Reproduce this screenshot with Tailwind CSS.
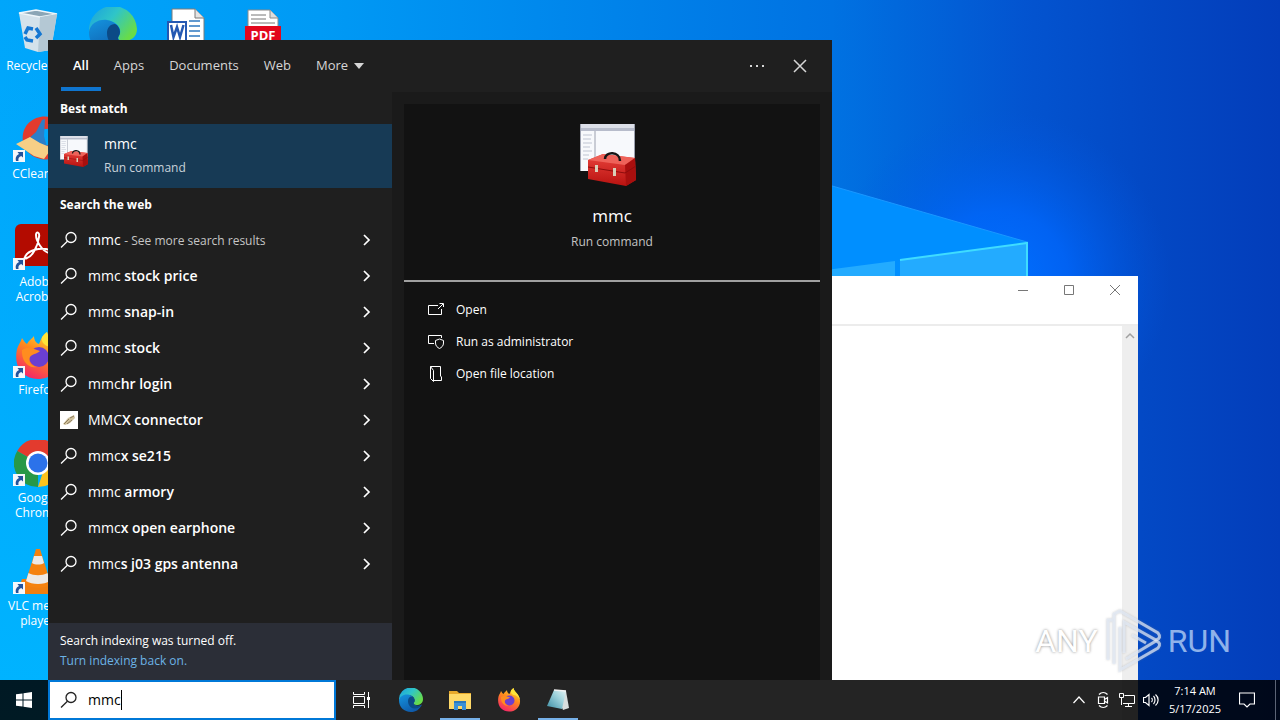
<!DOCTYPE html>
<html lang="en">

<head>
  <meta charset="UTF-8">
  <meta name="viewport" content="width=device-width, initial-scale=1.0">
  <title>Desktop - Search</title>
  <script src="https://cdn.jsdelivr.net/npm/@tailwindcss/browser@4"></script>
</head>

<body class="relative h-screen overflow-hidden bg-[#00a8fa] font-['Open_Sans','Noto_Sans',sans-serif] text-white">
  <!-- Shared symbols -->
  <svg class="absolute h-0 w-0" aria-hidden="true">
    <defs>
      <linearGradient id="edgeGreen" x1="0" y1="0" x2="1" y2="0.6">
        <stop offset="0" stop-color="#1a9fe0" />
        <stop offset="0.5" stop-color="#2fc5c8" />
        <stop offset="1" stop-color="#68dc48" />
      </linearGradient>
      <linearGradient id="edgeBlue" x1="0" y1="0" x2="0.6" y2="1">
        <stop offset="0" stop-color="#1494df" />
        <stop offset="1" stop-color="#0f59a8" />
      </linearGradient>
      <linearGradient id="foxBody" x1="0.8" y1="0" x2="0.3" y2="1">
        <stop offset="0" stop-color="#ffe53b" />
        <stop offset="0.45" stop-color="#ff8a1c" />
        <stop offset="1" stop-color="#f5236a" />
      </linearGradient>
      <linearGradient id="boxRed" x1="0" y1="0" x2="0" y2="1">
        <stop offset="0" stop-color="#e8433c" />
        <stop offset="1" stop-color="#b81210" />
      </linearGradient>
      <linearGradient id="padGlass" x1="0" y1="1" x2="1" y2="0">
        <stop offset="0" stop-color="#3b8da3" />
        <stop offset="0.6" stop-color="#9fd3dc" />
        <stop offset="1" stop-color="#e6f4f4" />
      </linearGradient>
    </defs>
    <symbol id="lens" viewBox="0 0 18 18">
      <circle cx="11" cy="6.5" r="5" fill="none" stroke="currentColor" stroke-width="1.3" />
      <path d="M7.4 10.2L1 16.5" fill="none" stroke="currentColor" stroke-width="1.3" />
    </symbol>
    <symbol id="chevron" viewBox="0 0 10 12">
      <path d="M2 1l5 5-5 5" fill="none" stroke="currentColor" stroke-width="1.7" />
    </symbol>
    <symbol id="edge" viewBox="0 0 48 48">
      <path d="M0 24A24 24 0 0 1 48 22C48 30 42 34 35 34C30 34 28 32 30 29C34 22 28 14 18 14C8 14 1 20 0 28Z" fill="url(#edgeGreen)" />
      <path d="M0 25C1 17 9 12 18 13C25 14 31 19 31 25C31 28 29 29 29 31C29 35 39 38 46 33C41 43 34 48 24 48C10 48 0 38 0 25Z" fill="url(#edgeBlue)" />
      <path d="M18 26C18 21 21 17 26 17C30 19 31 23 31 25C31 28 29 29 29 31C29 35 37 38 45 34C42 39 36 42 30 41C23 40 18 34 18 26Z" fill="#0b4a86" />
    </symbol>
    <symbol id="fox" viewBox="0 0 48 48">
      <path d="M3 17C4 13 7 10 8 6C10 9 11 11 13 12C15 8 18 7 20 4C20 8 22 11 25 12C27 8 28 3 33 0C34 8 45 12 46 25C47 38 37 47 24 47C10 47 -1 36 3 17Z" fill="url(#foxBody)" />
      <path d="M33 0C34 8 45 12 46 24C43 17 38 14 33 14C29 12 27 9 28 5Z" fill="#ffe43a" />
      <circle cx="25" cy="25" r="10" fill="#6b3fd0" />
      <path d="M8 18C14 14 20 17 26 19C23 22 18 22 16 25C14 29 17 34 23 35C14 37 7 28 8 18Z" fill="#ff8d1f" />
    </symbol>
    <symbol id="toolbox" viewBox="0 0 64 64">
      <path d="M0 0H55V47H0Z" fill="#f7f9fc" />
      <path d="M0 0H55V4H0Z" fill="#dcdfe8" />
      <path d="M0 4H55V7H0Z" fill="#b7bccb" />
      <path d="M15 7V46M0.5 0V47M54.5 0V47" stroke="#9ba0ae" stroke-width="1" />
      <path d="M3 11H12M3 15H11M3 19H12M3 23H10M3 27H12M3 31H9M3 35H8" stroke="#bfc5d2" stroke-width="1" />
      <path d="M8 36L23 30L55 34L56 56L46 62L8 55Z" fill="url(#boxRed)" />
      <path d="M8 36L23 30L55 34L45 41Z" fill="#ee6259" />
      <path d="M45 41L55 34L56 56L46 62Z" fill="#a80f0e" />
      <path d="M8 43L45 49L56 42" stroke="#8e0c0c" stroke-width="1" fill="none" />
      <path d="M25 35C25 27 40 27 40 37" stroke="#161616" stroke-width="2.5" fill="none" />
      <path d="M15 41h3v7h-3zM33 44h3v8h-3z" fill="#d9cfb8" />
    </symbol>
    <symbol id="shortcut" viewBox="0 0 12 12">
      <path d="M0 0H12V12H0Z" fill="#f4f7fb" />
      <path d="M3 11C2 7 4 5 6 4L4.5 2H10V7.5L8.2 6C6 7 5 8 5.5 11Z" fill="#24539b" />
    </symbol>
  </svg>

  <!-- Wallpaper -->
  <svg class="absolute inset-0 h-full w-full" viewBox="0 0 1280 720" preserveAspectRatio="none">
    <defs>
      <linearGradient id="sky" x1="0" y1="0" x2="1" y2="0">
        <stop offset="0" stop-color="#00a6fb" />
        <stop offset="0.25" stop-color="#009af5" />
        <stop offset="0.65" stop-color="#0072e2" />
        <stop offset="0.8" stop-color="#0354d0" />
        <stop offset="0.9" stop-color="#0348c4" />
        <stop offset="1" stop-color="#033dba" />
      </linearGradient>
      <radialGradient id="glow" gradientUnits="userSpaceOnUse" cx="1000" cy="280" r="170">
        <stop offset="0" stop-color="#0070ff" />
        <stop offset="0.4" stop-color="#0068ff" stop-opacity="0.75" />
        <stop offset="1" stop-color="#0058e0" stop-opacity="0" />
      </radialGradient>
      <linearGradient id="leftGlow" x1="0" y1="0" x2="0" y2="1">
        <stop offset="0" stop-color="#00b0ff" stop-opacity="0" />
        <stop offset="1" stop-color="#00b4ff" />
      </linearGradient>
    </defs>
    <path d="M0 0H1280V720H0Z" fill="url(#sky)" />
    <path d="M0 0H60V720H0Z" fill="url(#leftGlow)" />
    <path d="M780 60H1240V480H780Z" fill="url(#glow)" />
    <path d="M780 171L1027 242V300H780Z" fill="#008fff" />
    <path d="M780 171L1027 242" stroke="#1a98ff" />
    <path d="M780 276L895 261V300H780ZM900 260L1027 243V300H900Z" fill="#23abff" />
    <path d="M900 260L1027 243V300" stroke="#3fdcff" stroke-width="2" fill="none" />
  </svg>

  <!-- Desktop icons -->
  <div class="absolute top-0 left-0 grid auto-rows-[108px] grid-cols-[repeat(4,75px)] text-center text-xs leading-[15px]">
    <div class="flex flex-col items-center gap-0.5 pt-2">
      <svg class="h-12 w-12" viewBox="0 0 48 48">
        <path d="M5 5L22 2L43 6L37 42L24 44L11 40Z" fill="#d3e2eb" />
        <path d="M5 5L22 2L43 6L26 9Z" fill="#8ba6b6" stroke="#eef6fa" stroke-width="1.5" />
        <path d="M26 9L43 6L37 42L24 44Z" fill="#b4c8d4" />
        <path d="M11 26L14 20L19 21M22 20L26 26L22 30M19 33L13 32L11 29" stroke="#1477d2" stroke-width="3.5" fill="none" />
      </svg>
      <span class="whitespace-nowrap">Recycle Bin</span>
    </div>
    <div class="flex justify-center pt-[7px]">
      <svg class="h-12 w-12"><use href="#edge" /></svg>
    </div>
    <div class="flex justify-center pt-2">
      <svg class="h-12 w-12" viewBox="0 0 48 48">
        <path d="M8 1H31L40 10V48H8Z" fill="#fff" stroke="#7b7b7b" />
        <path d="M31 1V10H40" fill="#e4e4e4" stroke="#7b7b7b" />
        <path d="M25 13H36M25 18H36M25 23H36M25 28H36" stroke="#2e78c0" stroke-width="1.5" />
        <path d="M3 13H23V34H3Z" fill="#2458b2" />
        <path d="M5 15H21V32H5Z" fill="#fff" />
        <path d="M7 17L9.5 29L13 19L16 29L19.5 17" stroke="#2458b2" stroke-width="2.5" fill="none" />
      </svg>
    </div>
    <div class="flex justify-center pt-2">
      <svg class="h-12 w-12" viewBox="0 0 48 48">
        <path d="M9 2H31L39 10V48H9Z" fill="#fff" stroke="#8a8a8a" />
        <path d="M31 2V10H39" fill="#ddd" stroke="#8a8a8a" />
        <path d="M12 7H27M12 11H27M12 15H36" stroke="#777" />
        <path d="M6 18H42V40H6Z" fill="#e2061c" />
        <text x="24" y="32" text-anchor="middle" font-size="13" font-weight="700" fill="#fff">PDF</text>
      </svg>
    </div>

    <div class="relative col-start-1 flex flex-col items-center gap-0.5 pt-2">
      <svg class="h-12 w-12" viewBox="0 0 48 48">
        <path d="M44 4C26 -6 6 6 9 26C12 42 32 48 44 40V26C34 32 22 30 20 22C20 14 32 11 44 14Z" fill="#e23b2e" />
        <path d="M28 4L31 3L30 20L33 31L19 28L12 25L22 16Z" fill="#2c7fc8" />
        <path d="M2 28L16 21L26 27L38 32L30 43L20 40Z" fill="#f6cf86" />
      </svg>
      <svg class="absolute top-[42px] left-[13px] h-3 w-3"><use href="#shortcut" /></svg>
      <span>CCleaner</span>
    </div>
    <div class="relative col-start-1 flex flex-col items-center gap-0.5 pt-2">
      <svg class="h-12 w-12" viewBox="0 0 48 48">
        <rect x="1" y="0" width="44" height="42" rx="6" fill="#b30b00" />
        <path d="M11 33C14 26 26 23 36 26C41 28 39 31 35 29C28 27 22 17 22 11C22 7 26 8 25 13C24 22 18 33 13 34C11 35 10 34 11 33Z" fill="none" stroke="#fff" stroke-width="2" />
      </svg>
      <svg class="absolute top-[42px] left-[13px] h-3 w-3"><use href="#shortcut" /></svg>
      <span>Adobe<br>Acrobat</span>
    </div>
    <div class="relative col-start-1 flex flex-col items-center gap-0.5 pt-2">
      <svg class="h-12 w-12"><use href="#fox" /></svg>
      <svg class="absolute top-[42px] left-[13px] h-3 w-3"><use href="#shortcut" /></svg>
      <span>Firefox</span>
    </div>
    <div class="relative col-start-1 flex flex-col items-center gap-0.5 pt-2">
      <svg class="h-12 w-12" viewBox="0 0 48 48">
        <path d="M24 23L3.2 11A24 24 0 0 1 44.8 11Z" fill="#e33b2e" />
        <path d="M24 23L3.2 11A24 24 0 0 0 24 47Z" fill="#279847" />
        <path d="M24 47L32 23L44.8 11A24 24 0 0 1 24 47Z" fill="#fcc31e" />
        <circle cx="24" cy="23" r="12" fill="#fff" />
        <circle cx="24" cy="23" r="9.5" fill="#2c72ea" />
      </svg>
      <svg class="absolute top-[42px] left-[13px] h-3 w-3"><use href="#shortcut" /></svg>
      <span>Google<br>Chrome</span>
    </div>
    <div class="relative col-start-1 flex flex-col items-center gap-0.5 pt-2">
      <svg class="h-12 w-12" viewBox="0 0 48 48">
        <path d="M8 31H40L45 46H3Z" fill="#f07f10" />
        <path d="M22 1H26L37 36C32 41 16 41 11 36Z" fill="#f5820f" />
        <path d="M20 8H28L30 15C27 17 21 17 18 15ZM14.5 25C20 28 28 28 33.5 25L36 33C30 37 18 37 12 33Z" fill="#ece9e6" />
      </svg>
      <svg class="absolute top-[42px] left-[13px] h-3 w-3"><use href="#shortcut" /></svg>
      <span class="whitespace-nowrap">VLC media<br>player</span>
    </div>
  </div>

  <!-- Background window -->
  <div class="absolute top-[276px] right-[142px] bottom-0 left-60 flex flex-col bg-white text-[#777]">
    <div class="flex h-7 shrink-0 justify-end">
      <button class="flex w-[46px] items-center justify-center" aria-label="Minimize">
        <svg class="h-3 w-3" viewBox="0 0 12 12" fill="none" stroke="currentColor"><path d="M1 6.5H11" /></svg>
      </button>
      <button class="flex w-[46px] items-center justify-center" aria-label="Maximize">
        <svg class="h-3 w-3" viewBox="0 0 12 12" fill="none" stroke="currentColor"><path d="M1.5 1.5H10.5V10.5H1.5Z" /></svg>
      </button>
      <button class="flex w-[46px] items-center justify-center" aria-label="Close">
        <svg class="h-3 w-3" viewBox="0 0 12 12" fill="none" stroke="currentColor"><path d="M1 1L11 11M11 1L1 11" /></svg>
      </button>
    </div>
    <div class="h-[22px] shrink-0 border-b-2 border-[#ececec]"></div>
    <div class="flex flex-1 justify-end">
      <div class="flex w-4 justify-center bg-[#eeeeee] pt-1.5">
        <svg class="h-2 w-2.5" viewBox="0 0 10 8" fill="none" stroke="#a0a0a0" stroke-width="1.5"><path d="M1 6L5 2L9 6" /></svg>
      </div>
    </div>
  </div>

  <!-- Watermark -->
  <div class="absolute right-[49px] bottom-[46px] flex h-[66px] items-center gap-1.5 font-[Roboto,sans-serif] text-[32px] leading-none">
    <span class="text-white [text-shadow:0_0_3px_#888]">ANY</span>
    <svg class="h-16 w-[58px] drop-shadow-[0_0_1px_#8888]" viewBox="0 0 58 64" fill="none" stroke="#e4ecfa" stroke-opacity="0.7" stroke-width="3">
      <path d="M9 11H4V51M10 55V5L16 2L54 24Q58 29 52 31L20 13V44" />
      <path d="M16 18V61L54 39Q58 34 52 32L22 50M28 26L42 34" />
    </svg>
    <span class="text-[#8fb2ea]">RUN</span>
  </div>

  <!-- Search panel -->
  <main class="absolute top-10 bottom-10 left-12 flex w-[784px] flex-col bg-[#1f1f1f]">
    <nav class="flex h-[52px] shrink-0 items-stretch gap-px pr-[11px] pl-[13px] text-[13px] text-[#d6d6d6]">
      <button class="relative px-3 pb-px font-semibold text-white">All<span class="absolute bottom-px left-0 h-1 w-full bg-[#0f75cf]"></span></button>
      <button class="px-3 pb-px">Apps</button>
      <button class="px-3 pb-px">Documents</button>
      <button class="px-3 pb-px">Web</button>
      <button class="flex items-center gap-1.5 px-3 pb-px">More
        <svg class="h-1.5 w-2.5" viewBox="0 0 10 6"><path d="M0 0H10L5 6Z" fill="currentColor" /></svg>
      </button>
      <button class="ml-auto flex w-[42px] items-center justify-center" aria-label="Options">
        <svg class="h-1 w-4" viewBox="0 0 16 4" fill="currentColor"><path d="M1 1h2v2H1zM7 1h2v2H7zM13 1h2v2h-2z" /></svg>
      </button>
      <button class="flex w-[42px] items-center justify-center" aria-label="Close search">
        <svg class="h-3.5 w-3.5" viewBox="0 0 14 14" fill="none" stroke="currentColor" stroke-width="1.5"><path d="M1 1L13 13M13 1L1 13" /></svg>
      </button>
    </nav>

    <div class="flex min-h-0 flex-1">
      <section class="flex w-[344px] flex-col">
        <h2 class="flex h-8 items-center px-3 pt-0.5 text-xs font-bold">Best match</h2>
        <button class="flex h-16 items-center gap-3 bg-[#173a55] px-3 text-left">
          <svg class="mb-2 h-8 w-8"><use href="#toolbox" /></svg>
          <span class="flex flex-col">
            <span class="text-sm leading-6">mmc</span>
            <span class="text-xs leading-6 text-[#c8d2da]">Run command</span>
          </span>
        </button>
        <h2 class="flex h-8 items-center px-3 pt-0.5 text-xs font-bold">Search the web</h2>
        <ul class="pt-0.5 text-sm">
          <li><button class="flex h-9 w-full items-center gap-2.5 pr-5 pl-3"><svg class="h-[18px] w-[18px]"><use href="#lens" /></svg><span>mmc <span class="text-xs text-[#c6c6c6]">- See more search results</span></span><svg class="ml-auto h-3 w-2.5"><use href="#chevron" /></svg></button></li>
          <li><button class="flex h-9 w-full items-center gap-2.5 pr-5 pl-3"><svg class="h-[18px] w-[18px]"><use href="#lens" /></svg><span>mmc <b class="font-semibold">stock price</b></span><svg class="ml-auto h-3 w-2.5"><use href="#chevron" /></svg></button></li>
          <li><button class="flex h-9 w-full items-center gap-2.5 pr-5 pl-3"><svg class="h-[18px] w-[18px]"><use href="#lens" /></svg><span>mmc <b class="font-semibold">snap-in</b></span><svg class="ml-auto h-3 w-2.5"><use href="#chevron" /></svg></button></li>
          <li><button class="flex h-9 w-full items-center gap-2.5 pr-5 pl-3"><svg class="h-[18px] w-[18px]"><use href="#lens" /></svg><span>mmc <b class="font-semibold">stock</b></span><svg class="ml-auto h-3 w-2.5"><use href="#chevron" /></svg></button></li>
          <li><button class="flex h-9 w-full items-center gap-2.5 pr-5 pl-3"><svg class="h-[18px] w-[18px]"><use href="#lens" /></svg><span>mmc<b class="font-semibold">hr login</b></span><svg class="ml-auto h-3 w-2.5"><use href="#chevron" /></svg></button></li>
          <li><button class="flex h-9 w-full items-center gap-2.5 pr-5 pl-3">
            <svg class="h-[18px] w-[18px]" viewBox="0 0 18 18">
              <path d="M0 0H18V18H0Z" fill="#fff" />
              <path d="M3 13L8 7L14 4L15 7L10 12L5 14Z" fill="#cfc09a" />
              <path d="M4 13L9 8M7 13L12 9M10 7L14 5" stroke="#8d7d60" />
            </svg><span>MMC<b class="font-semibold">X connector</b></span><svg class="ml-auto h-3 w-2.5"><use href="#chevron" /></svg></button></li>
          <li><button class="flex h-9 w-full items-center gap-2.5 pr-5 pl-3"><svg class="h-[18px] w-[18px]"><use href="#lens" /></svg><span>mmc<b class="font-semibold">x se215</b></span><svg class="ml-auto h-3 w-2.5"><use href="#chevron" /></svg></button></li>
          <li><button class="flex h-9 w-full items-center gap-2.5 pr-5 pl-3"><svg class="h-[18px] w-[18px]"><use href="#lens" /></svg><span>mmc <b class="font-semibold">armory</b></span><svg class="ml-auto h-3 w-2.5"><use href="#chevron" /></svg></button></li>
          <li><button class="flex h-9 w-full items-center gap-2.5 pr-5 pl-3"><svg class="h-[18px] w-[18px]"><use href="#lens" /></svg><span>mmc<b class="font-semibold">x open earphone</b></span><svg class="ml-auto h-3 w-2.5"><use href="#chevron" /></svg></button></li>
          <li><button class="flex h-9 w-full items-center gap-2.5 pr-5 pl-3"><svg class="h-[18px] w-[18px]"><use href="#lens" /></svg><span>mmc<b class="font-semibold">s j03 gps antenna</b></span><svg class="ml-auto h-3 w-2.5"><use href="#chevron" /></svg></button></li>
        </ul>
        <div class="mt-auto bg-[#2b2e37] px-3 pt-2 pb-[9px] text-xs leading-5">
          <p>Search indexing was turned off.</p>
          <a href="#" class="text-[#6cb3e6]">Turn indexing back on.</a>
        </div>
      </section>

      <section class="flex-1 bg-[#1a1a1a] px-3 pt-3">
        <div class="h-full bg-[#121212]">
          <div class="flex h-[178px] flex-col items-center border-b-2 border-[#a0a0a0] pt-5">
            <svg class="h-16 w-16"><use href="#toolbox" /></svg>
            <h1 class="mt-4 text-[17px] leading-6">mmc</h1>
            <p class="mt-1 text-xs leading-5 text-[#c4c4c4]">Run command</p>
          </div>
          <div class="flex flex-col pt-3 text-xs">
            <button class="flex h-8 items-center gap-3 px-6"><svg class="h-4 w-4" viewBox="0 0 16 16" fill="none" stroke="currentColor"><path d="M10 3.500H0.500V12.500H13.500V7M10 7L15 2M11.500 1.500H15.500V5" /></svg>Open</button>
            <button class="flex h-8 items-center gap-3 px-6"><svg class="h-4 w-4" viewBox="0 0 16 16" fill="none" stroke="currentColor"><path d="M6 9.500H0.500V1.500H13.500V4M11.500 5L15.500 6.500V9C15.500 12 13.500 13.500 11.500 14.500C9.500 13.500 7.500 12 7.500 9V6.500Z" /></svg>Run as administrator</button>
            <button class="flex h-8 items-center gap-3 px-6"><svg class="h-4 w-4" viewBox="0 0 16 16" fill="none" stroke="currentColor"><path d="M2.500 0.500H12.500V10L13.500 11V14.500H6M2.500 0.500V12.500L5.500 15.500V4.500L2.500 0.500" /></svg>Open file location</button>
          </div>
        </div>
      </section>
    </div>
  </main>

  <!-- Taskbar -->
  <footer class="absolute inset-x-0 bottom-0 flex h-10 bg-black/86">
    <button class="flex w-12 items-center justify-center" aria-label="Start">
      <svg class="h-4 w-4" viewBox="0 0 16 16" fill="#fff"><path d="M0 2.300L6.500 1.400V7.500H0ZM7.500 1.200L16 0V7.500H7.500ZM0 8.500H6.500V14.600L0 13.700ZM7.500 8.500H16V16L7.500 14.800Z" /></svg>
    </button>
    <label class="flex w-72 items-center border-2 border-[#0078d7] bg-white pl-2.5 text-[#222]">
      <svg class="mr-2.5 h-[18px] w-[18px] shrink-0"><use href="#lens" /></svg>
      <input type="text" value="mmc" aria-label="Search" class="field-sizing-content text-sm text-black caret-transparent outline-none">
      <span class="h-5 w-px bg-black"></span>
    </label>
    <div class="flex gap-px">
      <button class="flex w-[50px] items-center justify-center" aria-label="Task view">
        <svg class="h-[18px] w-[18px]" viewBox="0 0 18 18" fill="none" stroke="#fff"><path d="M1.500 1V3.500H12.500V1M1.500 5.500H12.500V12.500H1.500ZM1.500 17V14.500H12.500V17M16.500 1V17" /><path d="M15 6h3v3h-3z" fill="#fff" stroke="none" /></svg>
      </button>
      <button class="flex w-12 items-center justify-center" aria-label="Microsoft Edge"><svg class="h-6 w-6"><use href="#edge" /></svg></button>
      <button class="relative flex w-12 items-center justify-center" aria-label="File Explorer">
        <svg class="h-6 w-6" viewBox="0 0 24 24">
          <path d="M1 3H9L11 5H23V21H1Z" fill="#e8a92b" />
          <path d="M1 6H23V21H1Z" fill="#ffd968" />
          <path d="M6 13H18V22H14V18H10V22H6Z" fill="#3b90d6" />
          <path d="M6 13H18V15H6Z" fill="#2b78bb" />
        </svg>
        <span class="absolute bottom-0 h-0.5 w-10 bg-[#76b0e8]"></span>
      </button>
      <button class="flex w-12 items-center justify-center" aria-label="Firefox"><svg class="h-6 w-6"><use href="#fox" /></svg></button>
      <button class="relative flex w-12 items-center justify-center" aria-label="Notepad">
        <svg class="h-6 w-6" viewBox="0 0 24 24">
          <path d="M8 2L20 3L23 20L17 22Z" fill="#d9dedd" />
          <path d="M8 2L20 3L16 21L1 18Z" fill="url(#padGlass)" />
          <path d="M8 2L20 3" stroke="#f2f2f2" stroke-width="1.5" />
        </svg>
        <span class="absolute bottom-0 h-0.5 w-10 bg-[#76b0e8]"></span>
      </button>
    </div>

    <div class="ml-auto flex items-center text-[11px]">
      <button class="flex w-6 justify-center" aria-label="Show hidden icons"><svg class="h-3 w-3" viewBox="0 0 12 12" fill="none" stroke="#fff" stroke-width="1.2"><path d="M0.500 9L6 3L11.500 9" /></svg></button>
      <button class="flex w-6 justify-center" aria-label="Meet now"><svg class="h-4 w-4" viewBox="0 0 16 16" fill="none" stroke="#fff" stroke-width="1.2"><path d="M4 2.500C6.500 0 10 0 12.500 2.500M4 13.500C6.500 16 10 16 12.500 13.500M3.500 5H9.500V11.500H3.500ZM9.500 7.500L12.500 5.500V11L9.500 9" /></svg></button>
      <button class="flex w-6 justify-center" aria-label="Network"><svg class="h-4 w-4" viewBox="0 0 16 16" fill="none" stroke="#fff"><path d="M5.500 3.500H15.500V11.500H4M0.500 1.500H4.500V5.500H0.500ZM2.500 5.500V13M9.500 11.500V14.500M6 14.500H13" /></svg></button>
      <button class="flex w-6 justify-center" aria-label="Volume"><svg class="h-4 w-4" viewBox="0 0 16 16" fill="none" stroke="#fff" stroke-width="1.2"><path d="M0.500 5.500H2.500L6 2.500V13.500L2.500 10.500H0.500ZM8.500 6C9.500 7 9.500 9 8.500 10M10.500 4C12.500 6 12.500 10 10.500 12M12.500 2.500C16 5.500 16 10.500 12.500 13.500" /></svg></button>
      <button class="w-16 text-center leading-[18px]">7:14 AM<br>5/17/2025</button>
      <button class="flex w-10 justify-center" aria-label="Notifications"><svg class="h-4 w-4" viewBox="0 0 16 16" fill="none" stroke="#fff" stroke-width="1.2"><path d="M0.500 1H15.500V12H11L8 15L5 12H0.500Z" /></svg></button>
      <span class="ml-2 h-10 w-[5px] border-l border-[#5c6475]"></span>
    </div>
  </footer>
</body>

</html>
